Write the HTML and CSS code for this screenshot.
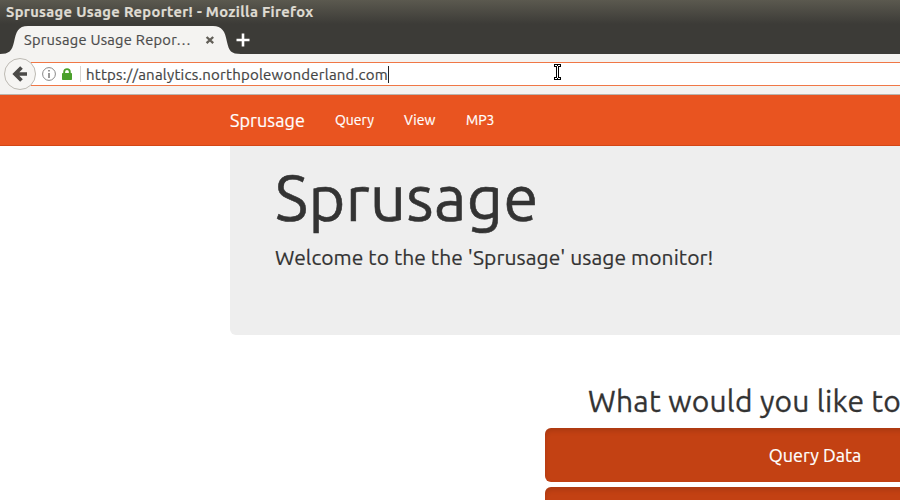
FILE: index.html
```html
<!DOCTYPE html>
<html lang="en">
<head>
<meta charset="utf-8">
<title>Sprusage Usage Reporter!</title>
<link rel="stylesheet" href="styles.css">
</head>
<body>
<div class="window">
  <header class="chrome">
    <div class="titlebar"><span class="t-title">Sprusage Usage Reporter! - Mozilla Firefox</span></div>
    <div class="tabs">
      <div class="tab">
        <svg class="tab-shape" width="246" height="29" viewBox="0 0 246 29"><path d="M0 28C9 28 12 25 14 16C16 6 18 0 28 0H213C222 0 225 5 227 16C229 25 231 28 241 28V29H0Z" fill="#f4f3f1"/></svg>
        <span class="t-tab">Sprusage Usage Repor…</span>
        <svg class="close" width="10" height="10" viewBox="0 0 10 10"><path d="M1.6 2L8.2 8.2M8.2 2L1.6 8.2" stroke="#625f58" stroke-width="2.3"/></svg>
      </div>
      <svg class="plus" width="14" height="14" viewBox="0 0 14 14"><path d="M7 .5V13.5M.5 7H13.5" stroke="#fff" stroke-width="2.6"/></svg>
    </div>
    <div class="toolbar">
      <svg class="back" width="34" height="34" viewBox="0 0 34 34"><circle cx="17" cy="17" r="15.5" fill="#f6f5f3" stroke="#bdbab3"/><path d="M18.5 10.5L12 17L18.5 23.5M12.5 17H24" fill="none" stroke="#4b4a48" stroke-width="3.7"/></svg>
      <div class="urlbar">
        <svg class="info" width="14" height="14" viewBox="0 0 14 14"><circle cx="7" cy="7" r="6.4" fill="none" stroke="#888"/><path d="M7 3V4.6M7 6V11" stroke="#777" stroke-width="1.5"/></svg>
        <svg class="lock" width="10" height="12" viewBox="0 0 10 12"><path d="M2.2 6V3.8C2.2 .2 7.8 .2 7.8 3.8V6" fill="none" stroke="#4aa02c" stroke-width="1.9"/><rect y="5" width="10" height="7" rx=".7" fill="#4aa02c"/></svg>
        <span class="divider"></span>
        <span class="t-url">https://analytics.northpolewonderland.com</span><span class="caret"></span>
      </div>
    </div>
  </header>
  <nav class="navbar">
    <a class="brand">Sprusage</a>
    <a class="link query">Query</a>
    <a class="link view">View</a>
    <a class="link mp3">MP3</a>
  </nav>
  <main class="container">
    <section class="jumbotron">
      <h1><span>Sprusage</span></h1>
      <p><span>Welcome to the the 'Sprusage' usage monitor!</span></p>
    </section>
    <section class="actions">
      <h2>What would you like to</h2>
      <a class="btn"><span>Query Data</span></a>
      <a class="btn"></a>
    </section>
  </main>
  <svg class="cursor" width="7" height="16" viewBox="0 0 7 16"><path d="M0 0H7V3H5V13H7V16H0V13H2V3H0Z" fill="#000"/><path d="M1 1H3V2H4V1H6V2H4V14H6V15H4V14H3V15H1V14H3V2H1Z" fill="#fff"/></svg>
</div>
</body>
</html>
```
FILE: styles.css
```css
* { box-sizing: border-box; }
body { margin: 0; background: #fff; color: #333; font-family: Ubuntu, "Noto Sans", sans-serif; -webkit-text-stroke: .2px currentColor; }
.window { position: relative; width: 900px; height: 500px; overflow: hidden; }
span, a { white-space: nowrap; }
svg { display: block; flex: none; }
.chrome { height: 95px; background: linear-gradient(#5b594f 0, #3c3b37 24px, #3c3b37 54px, #f4f3f1 54px); }
.titlebar { height: 26px; padding-left: 6px; line-height: 24px; font-size: 14.67px; letter-spacing: .34px; font-weight: 700; color: #dfdbd2; -webkit-text-stroke: .2px currentColor; }
.tabs { display: flex; height: 28px; align-items: center; }
.tab { position: relative; display: flex; align-items: center; width: 236px; height: 28px; padding-left: 24px; font-size: 14.67px; letter-spacing: .27px; color: #4c4c4c; }
.tab-shape { position: absolute; left: 0; top: 0; }
.t-tab { position: relative; width: 181px; padding-bottom: 2px; }
.close { position: relative; }
.toolbar { display: flex; align-items: center; height: 41px; padding-left: 3px; border-bottom: 1px solid #b9b5ae; }
.back { position: relative; z-index: 1; }
.urlbar { display: flex; align-items: center; flex: 1; height: 24px; margin-left: -6px; padding-left: 11px; background: #fff; border: solid #f07746; border-width: 1px 0; font-size: 15px; letter-spacing: .23px; color: #444; }
.lock { margin-left: 6px; }
.divider { width: 1px; height: 16px; margin: 0 5px 0 8px; background: #d7d5d1; }
.caret { width: 1px; height: 17px; background: #222; }
.navbar { display: flex; align-items: center; height: 51px; padding-left: 230px; background: #e95420; border-bottom: 1px solid #d34615; color: #fff; }
.brand { width: 105px; font-size: 18px; letter-spacing: .06px; }
.link { font-size: 14px; }
.query { width: 69px; }
.view { width: 62px; }
.container { width: 1170px; margin-left: 230px; }
.jumbotron { height: 189px; padding: 17px 45px 0; background: #eee; border-radius: 0 0 6px 6px; }
h1 { margin: 0; height: 69px; line-height: 69px; font-size: 63px; letter-spacing: .4px; font-weight: 400; -webkit-text-stroke-width: .6px; }
p { margin: 11px 0 0; font-size: 21px; line-height: 28px; letter-spacing: .08px; }
.actions { width: 540px; margin: 49px 0 0 315px; }
h2 { margin: 0 0 10px; padding: 1px 0 0 43px; line-height: 33px; font-size: 30px; letter-spacing: .25px; font-weight: 400; white-space: nowrap; -webkit-text-stroke-width: .3px; }
.btn { display: flex; align-items: center; justify-content: center; height: 54px; margin-bottom: 5px; border-radius: 6px; background: #c34113; box-shadow: inset 0 3px 5px rgba(0,0,0,.125); color: #fff; font-size: 18px; }
.cursor { position: absolute; left: 554px; top: 64px; }
```
